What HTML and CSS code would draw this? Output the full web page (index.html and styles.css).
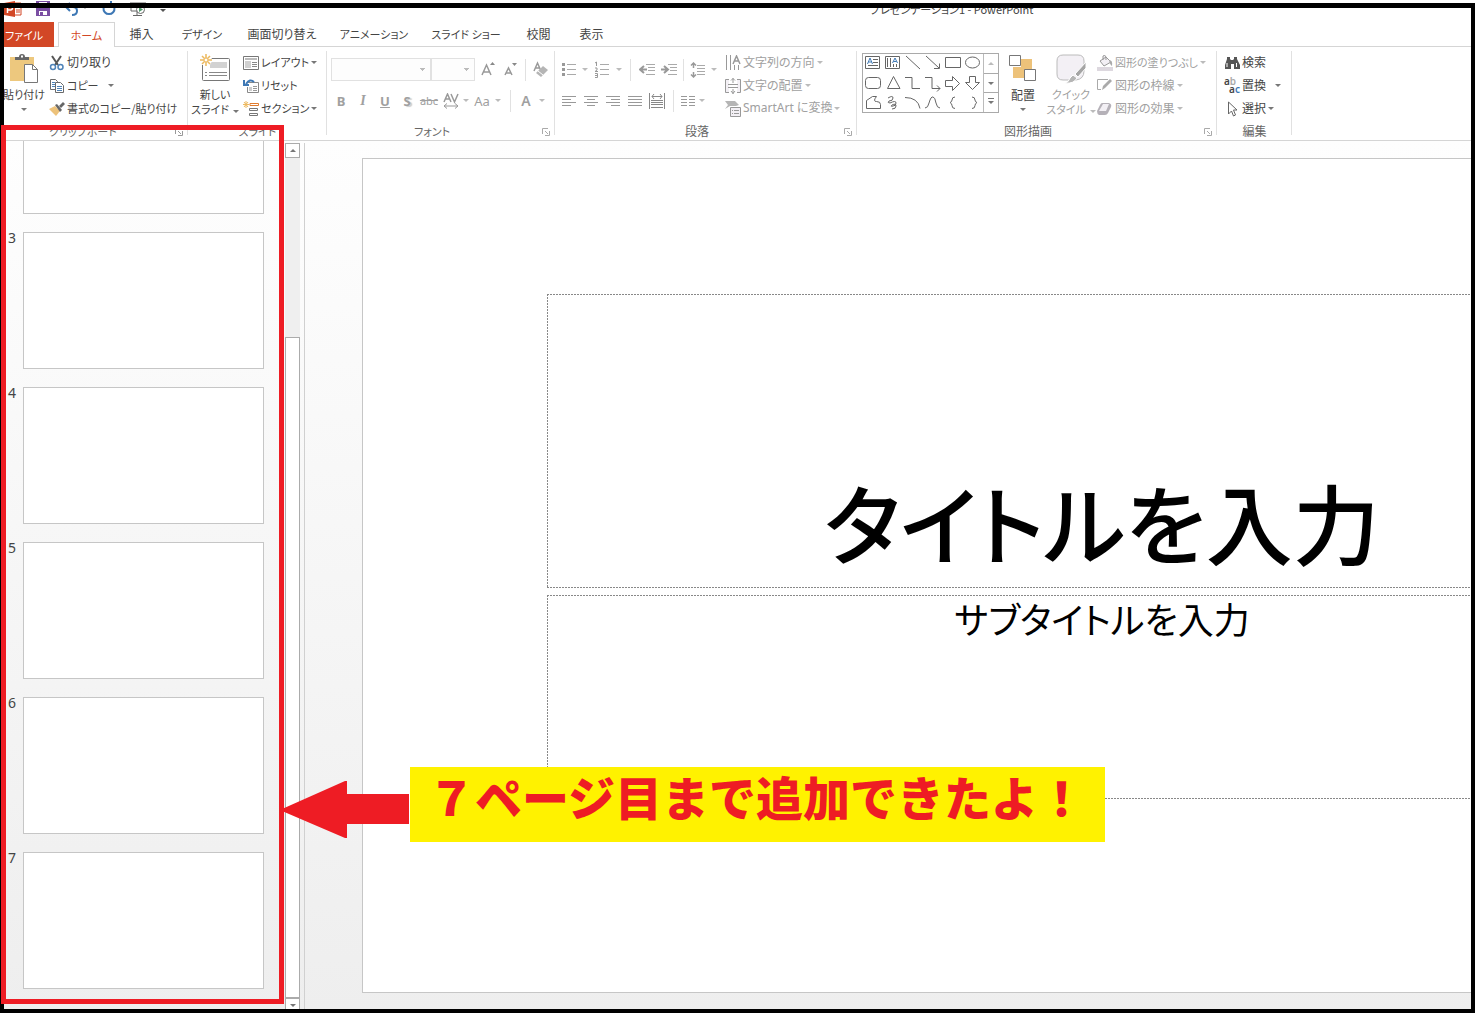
FILE: index.html
```html
<!DOCTYPE html>
<html lang="ja">
<head>
<meta charset="utf-8">
<title>プレゼンテーション1 - PowerPoint</title>
<link rel="stylesheet" href="styles.css">
</head>
<body>
<div class="window">
  <header class="titlebar">
    <div class="quick">
      <svg width="18" height="16" viewBox="0 0 18 16"><path d="M0 2l11-2v16L0 14z" fill="#d24726"/><path d="M11 2h6v12h-6" fill="#fff" stroke="#d24726"/><path d="M12 6h4M12 9h4M12 11h4" stroke="#d24726"/><path d="M3.500 12V4h3q2 0 2 2.500t-2 2.500h-3" fill="none" stroke="#fff" stroke-width="1.500"/></svg>
      <svg width="14" height="15" viewBox="0 0 14 15"><path d="M0 0h14v15H0z" fill="#7b4fa3"/><path d="M3 1h8v6H3zM3 10h8v4H3z" fill="#fff"/><path d="M4 11h3v3H4z" fill="#7b4fa3"/></svg>
      <svg width="24" height="15" viewBox="0 0 24 15"><path d="M2 6h7q4 0 4 4t-5 4M6 2L2 6l4 4" fill="none" stroke="#3e78b5" stroke-width="2"/><path d="M19 6h4l-2 2z" fill="#999"/></svg>
      <svg width="14" height="15" viewBox="0 0 14 15"><path d="M10 3a5.500 5.500 0 1 1-6 0M9 0v5h5" fill="none" stroke="#3e78b5" stroke-width="2"/></svg>
      <svg width="16" height="17" viewBox="0 0 16 17"><path d="M0 2h16M1 2v8h6M15 2v3M7 10v4M3 14.500h9" fill="none" stroke="#666"/><circle cx="10.500" cy="8.500" r="4" fill="#fff" stroke="#666"/><path d="M9 6l4 2.500L9 11z" fill="#4d9a6a"/></svg>
      <svg width="6" height="15" viewBox="0 0 6 15"><path d="M0 8h6l-3 3z" fill="#555"/></svg>
    </div>
    <h1 class="doc-name kana">プレゼンテーション1 - PowerPoint</h1>
  </header>

  <nav class="tabs">
    <button class="tab file">ファイル</button>
    <button class="tab active">ホーム</button>
    <button class="tab short">挿入</button>
    <button class="tab mid kana">デザイン</button>
    <button class="tab">画面切り替え</button>
    <button class="tab kana">アニメーション</button>
    <button class="tab kana">スライド ショー</button>
    <button class="tab short">校閲</button>
    <button class="tab short">表示</button>
  </nav>

  <div class="ribbon">
    <section class="group clipboard">
      <div class="tools">
        <button class="big">
          <svg width="30" height="32" viewBox="0 0 30 32"><path d="M1 4h24v24H1z" fill="#edc87e"/><path d="M6 7V4h4q0-3 3-3t3 3h4v3z" fill="#666"/><path d="M12 2.500h2v2h-2z" fill="#fff"/><path d="M15.500 11.500h8l5 5v13h-13z" fill="#fff" stroke="#777"/><path d="M23.500 11.500v5h5" fill="none" stroke="#777"/></svg>
          <span class="kana">貼り付け</span><i class="dd"></i>
        </button>
        <div class="rows">
          <button class="row"><svg width="16" height="16" viewBox="0 0 16 16"><path d="M3 1l6 9M12 1L6 10" fill="none" stroke="#555" stroke-width="2"/><circle cx="4" cy="12" r="2.500" fill="none" stroke="#4f83b8" stroke-width="1.500"/><circle cx="11.500" cy="12" r="2.500" fill="none" stroke="#4f83b8" stroke-width="1.500"/></svg><span>切り取り</span></button>
          <button class="row"><svg width="16" height="16" viewBox="0 0 16 16"><path d="M1.500 1.500h5l2 2v8h-7z" fill="#fff" stroke="#6a6a6a"/><path d="M6.500 4.500h5l3 3v7h-8z" fill="#fff" stroke="#6a6a6a"/><path d="M3 4.500h3M3 6.500h3M3 8.500h3M8 8.500h5M8 10.500h5M8 12.500h5" stroke="#4f83b8"/></svg><span class="kana">コピー</span><i class="dd far"></i></button>
          <button class="row"><svg width="16" height="16" viewBox="0 0 16 16"><path d="M0 8l6-3 5 5-4 5-3-3z" fill="#edc27a"/><path d="M6 4l2-1 5 6-2 2z" fill="#666"/><path d="M10 5l4-4 2 2-4 4z" fill="#666"/></svg><span class="kana">書式のコピー/貼り付け</span></button>
        </div>
      </div>
      <h2 class="kana">クリップボード</h2><button class="launch" aria-label="クリップボードの詳細"><svg width="8" height="8" viewBox="0 0 8 8"><path d="M.500 6V.500H6M3 3l3 3M7.500 3v4.500H3" fill="none" stroke="#999"/></svg></button>
    </section>

    <section class="group slides">
      <div class="tools">
        <button class="big">
          <svg width="32" height="32" viewBox="0 0 32 32"><rect x="3.500" y="5.500" width="27" height="22" rx="1" fill="#fff" stroke="#777"/><path d="M11 9h17v6H11z" fill="#d2d2d2"/><path d="M6 19.500h2M10 19.500h18M6 22.500h2M10 22.500h18" stroke="#888"/><circle cx="7" cy="7" r="6" fill="#fff"/><path d="M7 1v12M1 7h12M3 3l8 8M11 3l-8 8" stroke="#edb95e" stroke-width="1.500"/><circle cx="7" cy="7" r="2" fill="#fff" stroke="#edb95e"/></svg>
          <span class="kana">新しい</span><span class="kana">スライド<i class="dd in"></i></span>
        </button>
        <div class="rows">
          <button class="row"><svg width="16" height="16" viewBox="0 0 16 16"><path d="M.500 1.500h15v13H.500z" fill="#fff" stroke="#777"/><path d="M2 3h12v2H2z" fill="#bbb"/><path d="M2 6h6v7H2z" fill="#d0d0d0"/><path d="M9 7.500h5M9 9.500h5M9 11.500h5" stroke="#888"/></svg><span class="kana">レイアウト</span><i class="dd"></i></button>
          <button class="row"><svg width="16" height="16" viewBox="0 0 16 16"><path d="M4 4.500h11.500v10H4.500V9" fill="#fff" stroke="#888"/><path d="M6 9h3v4H6z" fill="#ccc"/><path d="M10 8.500h4M10 10.500h4M10 12.500h4" stroke="#999"/><path d="M11 4Q7 0 3 6M1 2v5h5" fill="none" stroke="#3e78b5" stroke-width="2"/></svg><span class="kana">リセット</span></button>
          <button class="row"><svg width="16" height="16" viewBox="0 0 16 16"><path d="M7 2.500h8.500v2H7z" fill="#fff" stroke="#e07b2d"/><path d="M6.500 7.500h8v2h-8zM6.500 12.500h8v2h-8z" fill="#fff" stroke="#777"/><path d="M3 0v7M0 3.500h6M1 1l4 5M5 1L1 6" stroke="#edb95e"/></svg><span class="kana">セクション</span><i class="dd"></i></button>
        </div>
      </div>
      <h2 class="kana">スライド</h2>
    </section>

    <section class="group font off">
      <div class="tools stack">
        <div class="strip names">
          <select aria-label="フォント名"></select>
          <select aria-label="フォント サイズ"></select>
          <button aria-label="拡大"><svg width="16" height="18" viewBox="0 0 16 18"><path d="M2 14L6.500 4 11 14M3.500 11h6" fill="none" stroke="#999" stroke-width="1.500"/><path d="M10 4h5l-2.500-3z" fill="#888"/></svg></button>
          <button aria-label="縮小"><svg width="16" height="18" viewBox="0 0 16 18"><path d="M2 14L5.500 7 9 14M3 12h5" fill="none" stroke="#999" stroke-width="1.500"/><path d="M9 2h5l-2.500 3z" fill="#888"/></svg></button>
          <i class="sep"></i>
          <button aria-label="書式のクリア"><svg width="16" height="18" viewBox="0 0 16 18"><path d="M1 10L4.500 2 8 10M2 7h5" fill="none" stroke="#999" stroke-width="1.500"/><path d="M3 12l7-7 5 4-7 7z" fill="#b5b5b5"/><path d="M5 10l5 4" stroke="#fff"/></svg></button>
        </div>
        <div class="strip styles">
          <button><b>B</b></button><button class="serif"><em>I</em></button><button><b><u>U</u></b></button><button class="shade"><b>S</b></button><button class="small"><s>abc</s></button>
          <button aria-label="文字の間隔"><svg width="16" height="16" viewBox="0 0 16 16"><path d="M1 9L4.500 1 8 9M2 6h5M8 1l3.500 8L15 1" fill="none" stroke="#999" stroke-width="1.500"/><path d="M1 13h14M4 10.500L1 13l3 2.500M12 10.500l3 2.500-3 2.500" fill="none" stroke="#999"/></svg></button><i class="dd"></i>
          <button>Aa</button><i class="dd"></i><i class="sep"></i><button><strong>A</strong></button><i class="dd"></i>
        </div>
      </div>
      <h2 class="kana">フォント</h2><button class="launch" aria-label="フォントの詳細"><svg width="8" height="8" viewBox="0 0 8 8"><path d="M.500 6V.500H6M3 3l3 3M7.500 3v4.500H3" fill="none" stroke="#aaa"/></svg></button>
    </section>

    <section class="group para off">
      <div class="tools">
        <div class="stack">
          <div class="strip lists">
            <button aria-label="箇条書き"><svg width="16" height="16" viewBox="0 0 16 16"><path d="M6 2.500h9M6 7.500h9M6 12.500h9" stroke="#aaa"/><path d="M1 1h3v3H1zM1 6h3v3H1zM1 11h3v3H1z" fill="#999"/></svg></button><i class="dd"></i>
            <button aria-label="段落番号"><svg width="16" height="18" viewBox="0 0 16 18"><path d="M6 3.500h9M6 8.500h9M6 13.500h9" stroke="#aaa"/><path d="M1 2l1.500-1v4M1 7h2v2L1 10.500h3M1 12.500h2.500v4H1M1 14.500h2.500" fill="none" stroke="#999"/></svg></button><i class="dd"></i><i class="sep"></i>
            <button aria-label="インデントを減らす"><svg width="16" height="14" viewBox="0 0 16 14"><path d="M7 1.500h9M9 4.500h7M9 7.500h7M7 11.500h9" stroke="#aaa"/><path d="M1 6.500h7M5 3L1 6.500 5 10" fill="none" stroke="#999" stroke-width="2"/></svg></button>
            <button aria-label="インデントを増やす"><svg width="16" height="14" viewBox="0 0 16 14"><path d="M7 1.500h9M9 4.500h7M9 7.500h7M7 11.500h9" stroke="#aaa"/><path d="M0 6.500h7M3 3l4 3.500L3 10" fill="none" stroke="#999" stroke-width="2"/></svg></button><i class="sep"></i>
            <button aria-label="行間"><svg width="16" height="16" viewBox="0 0 16 16"><path d="M7 3.500h8M7 6.500h8M7 9.500h8M7 12.500h8" stroke="#aaa"/><path d="M3.500 1v5M1 3.500L3.500 1 6 3.500M3.500 10v5M1 12.500L3.500 15 6 12.500" fill="none" stroke="#999" stroke-width="1.500"/></svg></button><i class="dd"></i>
          </div>
          <div class="strip aligns">
            <button aria-label="左揃え"><svg width="14" height="12" viewBox="0 0 14 12"><path d="M0 1.500h14M0 4.500h9M0 7.500h14M0 10.500h9" stroke="#999"/></svg></button>
            <button aria-label="中央揃え"><svg width="14" height="12" viewBox="0 0 14 12"><path d="M0 1.500h14M3 4.500h8M0 7.500h14M3 10.500h8" stroke="#999"/></svg></button>
            <button aria-label="右揃え"><svg width="14" height="12" viewBox="0 0 14 12"><path d="M0 1.500h14M5 4.500h9M0 7.500h14M5 10.500h9" stroke="#999"/></svg></button>
            <button aria-label="両端揃え"><svg width="14" height="12" viewBox="0 0 14 12"><path d="M0 1.500h14M0 4.500h14M0 7.500h14M0 10.500h14" stroke="#999"/></svg></button>
            <button aria-label="均等割り付け"><svg width="16" height="16" viewBox="0 0 16 16"><path d="M.500 0v16M15.500 0v16M2 7.500h12M2 9.500h12M2 11.500h12M2 14.500h12M3 3.500h10M5 1L3 3.500 5 6M11 1l2 2.500L11 6" fill="none" stroke="#888"/></svg></button><i class="sep"></i>
            <button aria-label="段組み"><svg width="14" height="12" viewBox="0 0 14 12"><path d="M0 1.500h6M0 4.500h6M0 7.500h6M0 10.500h6M8 1.500h6M8 4.500h6M8 7.500h6M8 10.500h6" stroke="#999"/></svg></button><i class="dd"></i>
          </div>
        </div>
        <div class="rows">
          <button class="row"><svg width="16" height="16" viewBox="0 0 16 16"><path d="M1.500 0v15M5.500 0v15M9.500 10v5M13.500 10v5" stroke="#999"/><path d="M8 9l3.500-8L15 9M9 6h5" fill="none" stroke="#999" stroke-width="1.500"/></svg><span>文字列の方向</span><i class="dd"></i></button>
          <button class="row"><svg width="16" height="16" viewBox="0 0 16 16"><path d="M4 1.500H.500v13H4M12 1.500h3.500v13H12" fill="#f3f0f5" stroke="#999"/><path d="M3 6.500h10M3 9.500h10M8 0v5M6 2.500L8 .500l2 2M8 11v5M6 13l2 2.500L10 13" fill="none" stroke="#999"/></svg><span>文字の配置</span><i class="dd"></i></button>
          <button class="row"><svg width="16" height="16" viewBox="0 0 16 16"><path d="M0 0h10l4 4-3 1H5L0 8l3-4z" fill="#b5b5b5"/><path d="M5.500 6.500h10v9h-10z" fill="#f3f0f5" stroke="#999"/><path d="M7 9.500h1M9 9.500h5M7 12.500h1M9 12.500h5" stroke="#999"/></svg><span class="latin">SmartArt に変換</span><i class="dd"></i></button>
        </div>
      </div>
      <h2>段落</h2><button class="launch" aria-label="段落の詳細"><svg width="8" height="8" viewBox="0 0 8 8"><path d="M.500 6V.500H6M3 3l3 3M7.500 3v4.500H3" fill="none" stroke="#aaa"/></svg></button>
    </section>

    <section class="group draw">
      <div class="tools">
        <div class="gallery">
          <svg width="120" height="58" viewBox="0 0 120 58" fill="none" stroke="#666">
            <path d="M2.500 2.500h14v12h-14zM10 5.500h5M10 8.500h5M5 11.500h10"/><path d="M4.500 10L7 4l2.500 6M5.500 8h3" stroke="#3e78b5"/>
            <path d="M22.500 2.500h14v12h-14zM24.500 4v9M27.500 4v9M30.500 10v3M33.500 10v3"/><path d="M29.500 9L32 4l2.500 5M30.500 7.500h3" stroke="#3e78b5"/>
            <path d="M43 2l14 13M63 2l13 12M76.500 9.500v5H71M82.500 3.500h15v10h-15z"/><ellipse cx="109.500" cy="8.500" rx="7" ry="5.500"/>
            <rect x="2.500" y="23.500" width="15" height="11" rx="3"/><path d="M30.500 22.500l6.500 12H24.500zM42 23.500h7v11h8M62 23.500h7v11h8M74 31.500l3 3-3 3M82.500 26.500h7v-4l7 7-7 7v-4h-7zM106.500 22.500h6v6h4l-7 7-7-7h4z"/>
            <path d="M3.500 54.500v-8l6-4 4 0q-4 5 0 5 4 0 4 3v4zM25 44q5-3 5 0t-4 3q-2 2 1 2 6-3 6 0t-3 3q-3 1-1-1 4-2 4 1t-4 3M42 43.500q13 0 15 11M62 54q3 0 4-5 2-7 4-6 2 0 3 6 1 5 4 5M92 43q-3 0-3 3 0 2-2 2.500 2 1 2 3 0 3 3 3M109 43q3 0 3 3 0 2 2 2.500-2 1-2 3 0 3-3 3"/>
          </svg>
          <div class="spin"><button aria-label="前の行"><i class="dd up"></i></button><button aria-label="次の行"><i class="dd"></i></button><button aria-label="その他"><i class="dd more"></i></button></div>
        </div>
        <button class="big arrange">
          <svg width="30" height="32" viewBox="0 0 30 32"><path d="M13 6h11v10h-1v9H5V14h8z" fill="#edc27a"/><path d="M1.500 2.500h11v10h-11zM16.500 16.500h11v11h-11z" fill="#fff" stroke="#777"/></svg>
          <span>配置</span><i class="dd"></i>
        </button>
        <button class="big quickstyle off">
          <svg width="32" height="32" viewBox="0 0 32 32"><path d="M8 2h15q6 0 6 6v10q0 8-8 9H8q-6 0-6-6V8q0-6 6-6z" fill="#f3f0f5" stroke="#bbb"/><path d="M31 9v6l-8 9-3-3z" fill="#a5a5a5" stroke="#fff"/><path d="M18 22l4 3q-3 6-12 5 4-1 5-5z" fill="#b5b5b5" stroke="#fff"/></svg>
          <span class="kana">クイック</span><span class="kana">スタイル<i class="dd in"></i></span>
        </button>
        <div class="rows off">
          <button class="row"><svg width="16" height="16" viewBox="0 0 16 16"><path d="M3 6l6-4 5 5-7 4zM6 5V1q2-2 3 1v3" fill="#f3f0f5" stroke="#999"/><path d="M12 5q4 0 3 6-2-1-3-6" fill="#aaa"/><path d="M0 12h16v4H0z" fill="#ddd8df"/></svg><span class="kana">図形の塗りつぶし</span><i class="dd"></i></button>
          <button class="row"><svg width="16" height="16" viewBox="0 0 16 16"><path d="M11 1.500H.500v10H4" fill="none" stroke="#aaa"/><path d="M5 12l1-4 7-7 2 2-7 7z" fill="#aaa"/></svg><span>図形の枠線</span><i class="dd"></i></button>
          <button class="row"><svg width="16" height="16" viewBox="0 0 16 16"><path d="M5 2h7q3 1 2 4l-3 6q-1 2-3 2H2q-2-1-2-4l3-6q1-2 2-2z" fill="#b5b1b8"/><path d="M6 3h6l-3 7H2z" fill="#f3f0f5"/></svg><span>図形の効果</span><i class="dd"></i></button>
        </div>
      </div>
      <h2>図形描画</h2><button class="launch" aria-label="図形の詳細"><svg width="8" height="8" viewBox="0 0 8 8"><path d="M.500 6V.500H6M3 3l3 3M7.500 3v4.500H3" fill="none" stroke="#aaa"/></svg></button>
    </section>

    <section class="group edit">
      <div class="tools">
        <div class="rows">
          <button class="row"><svg width="16" height="16" viewBox="0 0 16 16"><path d="M3 2h3v2l1 1h2l1-1V2h3v2l3 6v4h-6V9H7v5H1v-4l2-6z" fill="#555"/><path d="M3 8v4M12.500 8v4" stroke="#fff"/></svg><span>検索</span></button>
          <button class="row"><span class="swap"><span>a<small>b</small></span><span>a<em>c</em></span></span><span>置換</span><i class="dd far"></i></button>
          <button class="row"><svg width="16" height="16" viewBox="0 0 16 16"><path d="M4.500 1v12l3-3 2 5 2-1-2-5h3.500z" fill="#fff" stroke="#666"/></svg><span>選択</span><i class="dd"></i></button>
        </div>
      </div>
      <h2>編集</h2>
    </section>
  </div>

  <main class="work">
    <aside class="thumbs">
      <ol>
        <li><span>2</span><div class="thumb"></div></li>
        <li><span>3</span><div class="thumb"></div></li>
        <li><span>4</span><div class="thumb"></div></li>
        <li><span>5</span><div class="thumb"></div></li>
        <li><span>6</span><div class="thumb"></div></li>
        <li><span>7</span><div class="thumb"></div></li>
      </ol>
    </aside>
    <div class="scroll">
      <button aria-label="上へ"><i class="dd up"></i></button>
      <div class="track"></div>
      <div class="thumb-bar"></div>
      <button class="down" aria-label="下へ"><i class="dd"></i></button>
    </div>
    <div class="stage">
      <article class="slide">
        <div class="holder title">タイトルを入力</div>
        <div class="holder subtitle">サブタイトルを入力</div>
      </article>
    </div>
  </main>

  <div class="mark"></div>
  <svg class="arrow" width="128" height="58" viewBox="0 0 128 58"><path d="M0 28L63 0h2v13h62v30H65v14h-2L0 30z" fill="#ee1c24"/></svg>
  <p class="note">７ページ目まで追加できたよ！</p>
</div>
</body>
</html>
```
FILE: styles.css
```css
* { box-sizing: border-box; }

body {
  margin: 0;
  background: #fff;
  color: #444;
  font: 12px/16px "Noto Sans CJK JP", sans-serif;
  font-feature-settings: "palt";
}

h1, h2, p, ol { margin: 0; padding: 0; font-size: 12px; font-weight: 400; }
ol { list-style: none; }
svg { display: block; flex: none; }
i { font-style: normal; flex: none; }

button {
  border: 0;
  padding: 0;
  background: none;
  color: inherit;
  font: inherit;
  font-feature-settings: inherit;
  white-space: nowrap;
}

.window {
  position: relative;
  display: flex;
  flex-direction: column;
  height: 100vh;
  overflow: hidden;
}

.window::after {
  content: "";
  position: absolute;
  inset: 3px 0 0;
  border: 4px solid #000;
  border-top-width: 5px;
  pointer-events: none;
}

.titlebar { display: grid; grid-template-columns: 870px 1fr; height: 22px; flex: none; }
.quick { display: flex; align-items: flex-start; gap: 14px; padding: 1px 0 0 4px; }
.doc-name { padding-top: 1px; }

/* Tabs */
.tabs { display: flex; height: 25px; flex: none; padding-left: 4px; border-bottom: 1px solid #d5d5d5; }
.tab { width: 92px; height: 24px; font-size: 12px; }
.tab.file { width: 50px; height: 25px; padding-right: 10px; background: #d24726; color: #fff; font-size: 11px; }
.tab.active { width: 57px; height: 25px; margin-left: 4px; border: 1px solid #d5d5d5; border-bottom: 0; background: #fff; color: #d24726; font-size: 11px; }
.tab.short { width: 53px; }
.tab.mid { width: 68px; }
.kana, .tab.kana { font-size: 11px; }

/* Ribbon */
.ribbon { display: flex; height: 94px; flex: none; padding-top: 4px; border-bottom: 1px solid #d5d5d5; }
.group {
  position: relative;
  flex: none;
  background: linear-gradient(#e1e1e1, #e1e1e1) right top / 1px 84px no-repeat;
}
.tools { display: flex; height: 69px; }
.group h2 { padding-top: 3px; text-align: center; color: #666; }
.clipboard { width: 188px; }
.clipboard h2 { padding-right: 22px; }
.slides { width: 139px; }
.font { width: 228px; }
.font h2 { padding-right: 18px; }
.para { width: 302px; }
.para h2 { padding-right: 18px; }
.draw { width: 360px; }
.draw h2 { padding-right: 18px; }
.edit { width: 75px; }
.off { color: #a0a0a0; }
.launch { position: absolute; right: 5px; bottom: 4px; }

.rows { display: flex; flex-direction: column; }
.row { display: flex; align-items: center; gap: 2px; height: 23px; }
.row > span { padding-bottom: 2px; }
.latin { font-family: "Noto Sans", "Noto Sans CJK JP", sans-serif; }
.swap { display: flex; flex-direction: column; width: 16px; font: 600 10px/8px "Noto Sans", sans-serif; }
.swap span { text-align: left; }
.swap span:last-child { text-align: right; }
.swap small { font-size: 10px; color: #aaa; }
.swap em { font-style: normal; color: #3e78b5; }

.dd {
  align-self: center;
  justify-self: center;
  border: 3px solid transparent;
  border-top-color: #777;
  border-bottom: 0;
  width: 6px;
  height: 3px;
}
.off .dd { border-top-color: #bbb; }
.dd.far { margin-left: 7px; }
.dd.in { display: inline-block; margin-left: 4px; vertical-align: middle; }
.dd.up { border-top: 0; border-bottom: 3px solid #777; }

.big { display: flex; flex-direction: column; align-items: center; width: 48px; padding-top: 2px; line-height: 15px; }
.big svg { margin-bottom: 2px; }
.big > .dd { margin-top: 6px; }
.clipboard .tools { gap: 1px; }
.slides .tools { padding-left: 3px; gap: 4px; }

.stack { display: flex; flex-direction: column; padding: 3px 0 0 3px; }
.strip { display: grid; height: 31px; align-items: center; justify-items: center; }
.sep { width: 1px; height: 22px; background: #e1e1e1; }
.names { grid-template-columns: 100px 44px 26px 20px 8px 24px; padding-left: 1px; }
.names select {
  appearance: none;
  width: 100%;
  height: 23px;
  margin: 0;
  border: 1px solid #e1e1e1;
  border-radius: 0;
  background: conic-gradient(from -45deg at 50% 100%, #bbb 90deg, transparent 0) right 5px center / 6px 3px no-repeat #fdfdfd;
}
.styles { grid-template-columns: repeat(6, 22px) 8px 24px 8px 16px 16px 16px; }
.strip button { font-family: "Noto Sans", sans-serif; font-size: 13px; }
.strip .serif { font-family: "Liberation Serif", serif; font-size: 14px; font-weight: 700; }
.strip .small { font-size: 11px; }
.shade { text-shadow: 2px 1px 1px #ccc; }
.styles strong { font-size: 14px; font-weight: 600; }
.lists { grid-template-columns: 22px 10px 24px 10px 12px 22px 22px 6px 24px 8px; }
.aligns { grid-template-columns: repeat(5, 22px) 10px 20px 8px; }
.para .tools { gap: 7px; }

.draw .tools { padding-left: 5px; }
.gallery { display: flex; width: 137px; height: 60px; margin-top: 2px; border: 1px solid #aaa; }
.spin { display: flex; flex-direction: column; flex: 1; border-left: 1px solid #bbb; }
.spin button { display: flex; flex: 1; justify-content: center; border-top: 1px solid #aaa; }
.spin button:first-child { border-top: 0; opacity: .5; }
.dd.more { position: relative; }
.dd.more::before { content: ""; position: absolute; left: -3px; top: -6px; width: 6px; height: 1px; background: #777; }
.draw .rows { margin-left: 2px; }
.edit .tools { padding-left: 7px; }

/* Workspace */
.work { display: flex; flex: 1; min-height: 0; background: linear-gradient(#fefefe, #eee); }
.thumbs { width: 285px; overflow: hidden; flex: none; }
.thumbs ol { margin-top: -64px; }
.thumbs li { display: flex; height: 155px; padding-left: 8px; font: 14px/12px "Noto Sans", sans-serif; }
.thumbs li span { width: 15px; }
.thumb { width: 241px; height: 137px; border: 1px solid #c6c6c6; background: #fff; }

.scroll { display: flex; flex-direction: column; width: 15px; flex: none; padding-top: 2px; }
.scroll button { display: flex; justify-content: center; height: 15px; flex: none; border: 1px solid #ababab; background: #fff; }
.track { flex: 179; background: #efefef; }
.thumb-bar { flex: 661; border: 1px solid #ababab; background: #fff; }

.stage { flex: 1; min-width: 0; overflow: hidden; margin: 2px 0 0 4px; padding: 15px 0 0 57px; border-left: 1px solid #d0d0d0; }
.slide { width: 1480px; height: 835px; padding: 135px 184px 0; border: 1px solid #c6c6c6; background: #fff; color: #000; }
.holder {
  padding: 1px;
  text-align: center;
  background:
    repeating-linear-gradient(90deg, #888 0 2px, transparent 2px 3px) top / 100% 1px no-repeat,
    repeating-linear-gradient(90deg, #888 0 2px, transparent 2px 3px) bottom / 100% 1px no-repeat,
    repeating-linear-gradient(#888 0 2px, transparent 2px 3px) left / 1px 100% no-repeat,
    repeating-linear-gradient(#888 0 2px, transparent 2px 3px) right / 1px 100% no-repeat;
}
.title { display: flex; align-items: flex-end; justify-content: center; height: 294px; font-size: 87px; font-weight: 500; line-height: 132px; }
.subtitle { height: 204px; margin-top: 7px; font-size: 36px; line-height: 44px; }

/* Annotations over the window */
.mark { position: absolute; z-index: 1; left: 1px; top: 125px; width: 283px; height: 879px; border: 5px solid #ee1c24; }
.arrow { position: absolute; left: 282px; top: 781px; }
.note {
  position: absolute;
  left: 410px;
  top: 767px;
  width: 695px;
  height: 75px;
  padding-left: 18px;
  background: #fff200;
  color: #ee1c24;
  font-size: 47px;
  font-weight: 900;
  line-height: 58px;
  font-feature-settings: normal;
  white-space: nowrap;
}
```
